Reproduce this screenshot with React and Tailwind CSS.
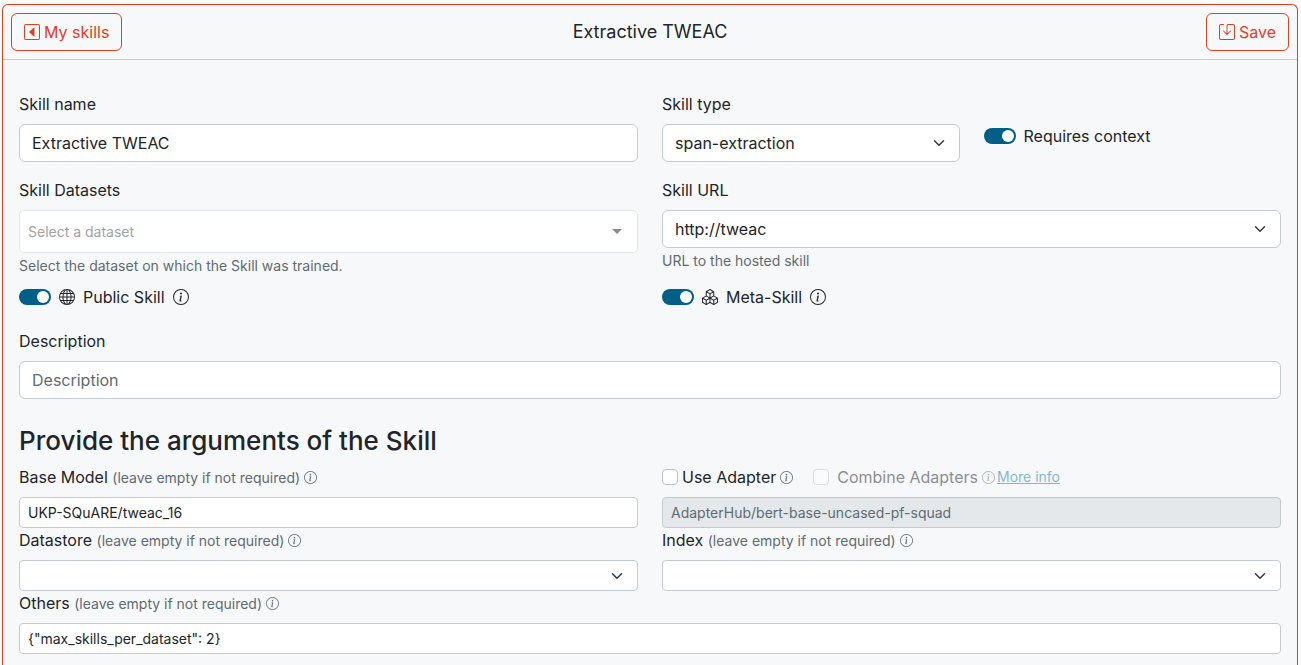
import { useId } from "react";
import { BsBoxes, BsCaretLeftSquare, BsGlobe, BsInfoCircle, BsSave } from "react-icons/bs";

const field =
  "block w-full appearance-none border border-[#c3cbd1] bg-white text-[#212529] placeholder:text-[#5f6b72] outline-none focus:border-[#005f86] disabled:bg-[#e4e8eb] disabled:text-[#5f6b72] disabled:opacity-100";
const fieldMd = "h-[38px] rounded-md px-3 text-base";
const fieldSm = "h-[31px] rounded px-2 text-sm";

function Select({ id, small, options }) {
  return (
    <div className="relative">
      <select id={id} className={`${field} ${small ? fieldSm : fieldMd}`}>
        {options.map((o) => (
          <option key={o}>{o}</option>
        ))}
      </select>
      <svg
        viewBox="0 0 16 16"
        className="pointer-events-none absolute inset-y-0 right-[13px] my-auto h-3 w-4"
        fill="none"
        stroke="#343a40"
        strokeWidth="2"
        strokeLinecap="round"
        strokeLinejoin="round"
      >
        <path d="m2 5 6 6 6-6" />
      </svg>
    </div>
  );
}

function Switch({ id }) {
  return (
    <input
      id={id}
      type="checkbox"
      role="switch"
      defaultChecked
      className="h-4 w-8 shrink-0 appearance-none rounded-full bg-gray-300 p-0.5 before:block before:size-3 before:rounded-full before:bg-white checked:bg-[#005f86] checked:before:ml-4"
    />
  );
}

function Field({ label, help, children }) {
  const id = useId();
  return (
    <div>
      <label htmlFor={id} className="mb-2 block">
        {label}
      </label>
      {children(id)}
      {help && <p className="mt-1 text-sm leading-[18px] text-[#5f6b72]">{help}</p>}
    </div>
  );
}

function Argument({ label, children }) {
  const id = useId();
  return (
    <div>
      <div className="mb-2 flex items-center">
        <label htmlFor={id}>
          {label}{" "}
          <small className="text-sm text-[#5f6b72]">(leave empty if not required)</small>
        </label>
        <BsInfoCircle className="ml-1 size-[13px] text-[#5f6b72]" />
      </div>
      {children(id)}
    </div>
  );
}

const outlineButton =
  "flex h-[38px] items-center gap-1 rounded-md border border-[#e63c1e] px-3 text-base text-[#e63c1e]";

export default function App() {
  return (
    <div className="min-h-screen bg-[#fafafa] pt-1 pr-[3px] pl-0.5 font-['Inter',sans-serif] text-base text-[#212529]">
      <form className="rounded-t-md border border-b-0 border-[#e63c1e] bg-[#f7f8fa]">
        <header className="grid grid-cols-[1fr_auto_1fr] items-center border-b border-[#c8cbcf] p-2">
          <button type="button" className={`${outlineButton} justify-self-start`}>
            <BsCaretLeftSquare className="size-4" />
            My skills
          </button>
          <h1 className="text-lg leading-6">Extractive TWEAC</h1>
          <button type="submit" className={`${outlineButton} justify-self-end`}>
            <BsSave className="size-4" />
            Save
          </button>
        </header>

        <div className="px-4 pt-8 pb-[11px]">
          <div className="grid grid-cols-2 gap-x-6">
            <Field label="Skill name">
              {(id) => (
                <input id={id} type="text" defaultValue="Extractive TWEAC" className={`${field} ${fieldMd}`} />
              )}
            </Field>
            <div className="grid grid-cols-2 gap-x-6">
              <Field label="Skill type">
                {(id) => (
                  <Select id={id} options={["span-extraction", "abstractive", "multiple-choice", "categorical"]} />
                )}
              </Field>
              <div className="flex items-center gap-2 self-center pt-[18px]">
                <Switch id="requires-context" />
                <label htmlFor="requires-context">Requires context</label>
              </div>
            </div>
          </div>

          <div className="mt-4 grid grid-cols-2 gap-x-6">
            <Field label="Skill Datasets" help="Select the dataset on which the Skill was trained.">
              {(id) => (
                <div className="relative">
                  <input
                    id={id}
                    type="text"
                    role="combobox"
                    aria-expanded="false"
                    placeholder="Select a dataset"
                    className="block h-[43px] w-full rounded-[5px] border border-[#e3e6e9] bg-white px-2 text-sm outline-none placeholder:text-[#a0a3a5]"
                  />
                  <svg
                    viewBox="0 0 10 5"
                    className="pointer-events-none absolute inset-y-0 right-4 my-auto h-[5px] w-2.5"
                    fill="#8c8c8c"
                  >
                    <path d="M0 0h10L5 5z" />
                  </svg>
                </div>
              )}
            </Field>
            <Field label="Skill URL" help="URL to the hosted skill">
              {(id) => <Select id={id} options={["http://tweac"]} />}
            </Field>
          </div>

          <div className="mt-2.5 grid grid-cols-2 gap-x-6">
            <div className="flex items-center">
              <Switch id="public-skill" />
              <label htmlFor="public-skill" className="ml-2 flex items-center gap-2">
                <BsGlobe className="size-4" />
                Public Skill
                <BsInfoCircle className="size-4" />
              </label>
            </div>
            <div className="flex items-center">
              <Switch id="meta-skill" />
              <label htmlFor="meta-skill" className="ml-2 flex items-center gap-2">
                <BsBoxes className="size-4" />
                Meta-Skill
                <BsInfoCircle className="size-4" />
              </label>
            </div>
          </div>

          <div className="mt-5">
            <Field label="Description">
              {(id) => (
                <input id={id} type="text" placeholder="Description" className={`${field} ${fieldMd}`} />
              )}
            </Field>
          </div>

          <h2 className="mt-6 mb-1.5 text-[26px] leading-9 font-medium">
            Provide the arguments of the Skill
          </h2>

          <div className="grid grid-cols-2 gap-x-6">
            <Argument label="Base Model">
              {(id) => (
                <input id={id} type="text" defaultValue="UKP-SQuARE/tweac_16" className={`${field} ${fieldSm}`} />
              )}
            </Argument>
            <div>
              <div className="mb-2 flex items-center">
                <input
                  id="use-adapter"
                  type="checkbox"
                  className="size-4 appearance-none rounded border border-[#bfbfbf] bg-white checked:bg-[#005f86]"
                />
                <label htmlFor="use-adapter" className="ml-1">
                  Use Adapter
                </label>
                <BsInfoCircle className="ml-1 size-[13px] text-[#5f6b72]" />
                <div className="ml-5 flex items-center opacity-50">
                  <input
                    id="combine-adapters"
                    type="checkbox"
                    disabled
                    className="size-4 appearance-none rounded border border-[#bfbfbf] bg-white"
                  />
                  <label htmlFor="combine-adapters" className="ml-2">
                    Combine Adapters
                  </label>
                  <BsInfoCircle className="mr-0.5 ml-1 size-[13px] text-[#5f6b72]" />
                  <a href="#more-info" className="text-sm text-[#007ba8] underline">
                    More info
                  </a>
                </div>
              </div>
              <input
                type="text"
                aria-label="Adapter"
                disabled
                defaultValue="AdapterHub/bert-base-uncased-pf-squad"
                className={`${field} ${fieldSm}`}
              />
            </div>
            <Argument label="Datastore">
              {(id) => <Select id={id} small options={[""]} />}
            </Argument>
            <Argument label="Index">
              {(id) => <Select id={id} small options={[""]} />}
            </Argument>
          </div>
          <Argument label="Others">
            {(id) => (
              <input
                id={id}
                type="text"
                defaultValue={'{"max_skills_per_dataset": 2}'}
                className={`${field} ${fieldSm}`}
              />
            )}
          </Argument>
        </div>
      </form>
    </div>
  );
}
